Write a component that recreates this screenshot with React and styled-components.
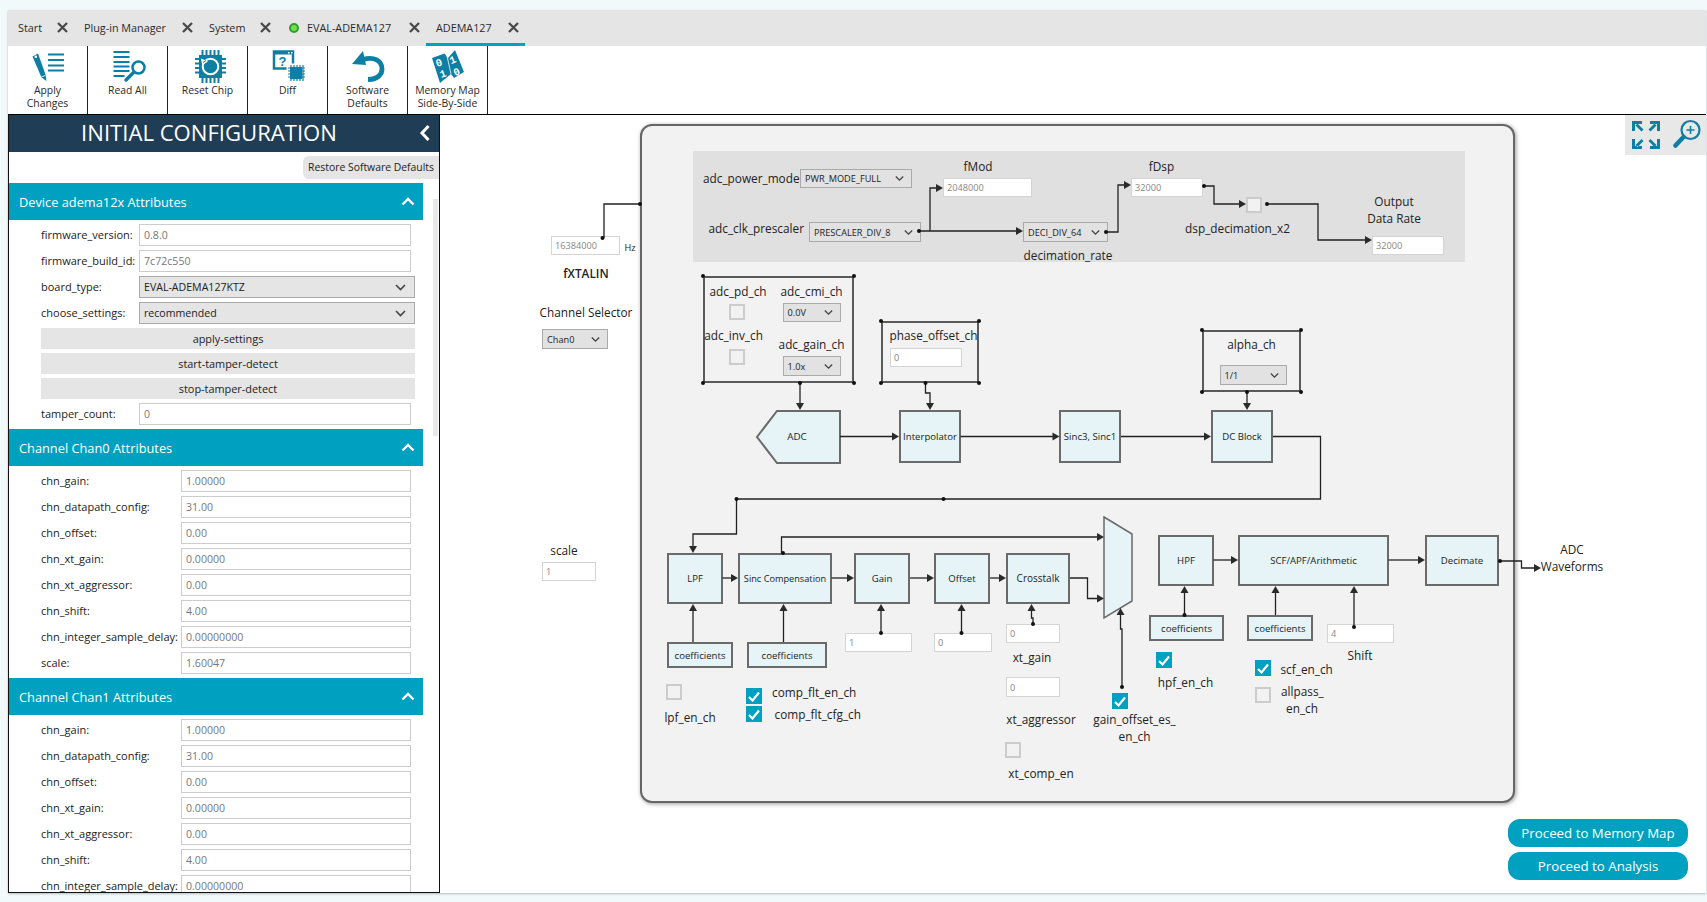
import React from 'react';
import styled, { createGlobalStyle, css } from 'styled-components';

const OX = 440;
const OY = 115;
const TEAL = '#00a1c0';
const ICON = '#0d7fa5';
const FONT = '"Open Sans", "Noto Sans", "Liberation Sans", sans-serif';

const Global = createGlobalStyle`
  html, body { margin: 0; padding: 0; height: 100%; overflow: hidden; background: #f1f9fb; }
  body { font-family: ${FONT}; color: #222; }
  #root { height: 100%; padding: 10px 1px 9px 8px; }
  * { box-sizing: border-box; }
`;

const Window = styled.div`
  width: 1698px; height: 883px;
  display: flex; flex-direction: column; background: #fff;
  box-shadow: 0 1px 2px rgba(0,0,0,.25);
`;
const TabBar = styled.div`
  height: 36px; background: #e5e5e5; display: flex; align-items: stretch; flex: none;
`;
const Tab = styled.div`
  display: flex; align-items: center; height: 36px; padding: 2px 0 0 ${p => p.$pl}px; width: ${p => p.$w}px;
  font-size: 10.8px; color: #2a2a2a; white-space: nowrap;
  border-bottom: 3px solid ${p => (p.$active ? TEAL : 'transparent')};
`;
const TabClose = styled.svg`
  margin-left: auto; margin-right: ${p => p.$mr || 6}px; width: 11px; height: 11px; flex: none;
`;
const StatusDot = styled.span`
  width: 10px; height: 10px; border-radius: 50%; background: #6fe04d; border: 2px solid #2e9e2a; margin-right: 8px; flex: none;
`;
const Toolbar = styled.div`
  height: 69px; flex: none; display: flex; border-bottom: 1px solid #000; background: #fff;
`;
const ToolButton = styled.div`
  width: 80px; height: 68px; border-right: 1px solid #222; display: flex; flex-direction: column; align-items: center;
  padding-top: 4px; font-size: 10.4px; line-height: 13px; text-align: center; color: #2a2a2a;
`;
const ToolIcon = styled.svg`
  width: 36px; height: 33px; flex: none; margin-bottom: 1px;
`;
const Main = styled.div`
  flex: 1; display: flex; min-height: 0;
`;
const Side = styled.aside`
  width: 432px; flex: none; border-left: 1px solid #111; border-right: 1px solid #111; border-bottom: 1px solid #111;
  position: relative; overflow: hidden; background: #fff;
`;
const SideHeader = styled.div`
  height: 37px; background: #1f3d55; color: #fff; font-size: 22.1px; display: flex; align-items: center; justify-content: center;
  padding: 0 30px 3px 0; position: relative;
`;
const Collapse = styled.svg`
  position: absolute; right: 8px; top: 9px; width: 12px; height: 18px;
`;
const RestoreRow = styled.div`
  height: 31px; display: flex; justify-content: flex-end; padding-top: 4px;
`;
const Restore = styled.div`
  width: 136px; height: 23px; background: #e5e5e5; border-radius: 6px 0 0 6px; font-size: 10.4px; padding-bottom: 1px; display: flex; align-items: center; justify-content: center; white-space: nowrap;
`;
const Scrollbar = styled.div`
  position: absolute; left: 424px; top: 84px; width: 5px; height: 237px; background: #e8e8e8;
`;
const SectionHead = styled.div`
  width: 414px; height: 37px; background: ${TEAL}; color: #fff; font-size: 12.8px; font-weight: 500; display: flex; align-items: center; justify-content: space-between;
  padding: 0 8px 0 10px;
`;
const Rows = styled.div`
  width: 414px; padding: 4px 0 4px 32px; display: flex; flex-direction: column; gap: 4px;
`;
const Row = styled.div`
  display: flex; align-items: center; height: 22px; padding-right: ${p => (p.$select ? 8 : 12)}px;
`;
const RowLabel = styled.label`
  width: ${p => p.$w}px; flex: none; font-size: 11px; color: #222; white-space: nowrap; padding-bottom: 1px;
`;
const FieldInput = styled.div`
  flex: 1; height: 22px; border: 1px solid #ccc; background: #fff; color: #777; font-size: 10.6px; display: flex; align-items: center; padding-left: 4px;
`;
const FieldSelect = styled.div`
  flex: 1; height: 22px; border: 1px solid #aaa; background: #e5e5e5; color: #222; font-size: 10.6px; display: flex; align-items: center; justify-content: space-between; padding: 0 8px 0 4px;
`;
const ActionBtn = styled.div`
  height: 21px; margin-right: 8px; background: #e5e5e5; font-size: 10.9px; font-weight: 500; display: flex; align-items: center; justify-content: center; color: #222; padding-bottom: 1px;
`;
const Canvas = styled.main`
  flex: 1; position: relative; overflow: hidden; background: #fff;
`;
const Wires = styled.svg`
  position: absolute; left: 0; top: 0; width: 1267px; height: 779px; pointer-events: none; z-index: 3;
`;
const Panel = styled.div`
  position: absolute; left: ${640 - OX}px; top: ${124 - OY}px; width: 875px; height: 679px; background: #f2f2f2;
  border: 2px solid #666; border-radius: 12px; box-shadow: 1px 1px 4px rgba(0,0,0,.4);
`;
const placed = p => `left:${p.$x - OX}px;top:${p.$y - OY}px;width:${p.$w}px;height:${p.$h}px;`;
const Band = styled.div`
  position: absolute; ${placed}; background: #e0e0e0;
`;
const Group = styled.div`
  position: absolute; ${placed}; border: 2px solid #5a5a5a; display: flex; flex-direction: column; align-items: center; padding-top: 5px; z-index: 2;
`;
const AdcGroup = styled(Group)`
  flex-direction: row; align-items: flex-start; padding-top: 6px;
`;
const Stack = styled.div`
  width: ${p => p.$w}px; display: flex; flex-direction: column; align-items: center; flex: none;
`;
const StackLabel = styled.span`
  font-size: 11.8px; line-height: 14px; color: #222; white-space: nowrap; margin-top: ${p => p.$mt || 0}px; margin-right: ${p => p.$mr || 0}px; margin-left: ${p => p.$ml || 0}px;
`;
const Block = styled.div`
  position: absolute; ${placed}; background: #e6f4f8; border: 2px solid #6a6a6a; font-size: ${p => p.$size || 9.6}px; color: #222; display: flex; align-items: center; justify-content: center; white-space: nowrap;
  padding-bottom: ${p => p.$pb || 0}px; z-index: 1;
`;
const Shape = styled.svg`
  position: absolute; ${placed};
`;
const ShapeText = styled.div`
  position: absolute; left: ${p => p.$cx - OX}px; top: ${p => p.$cy - OY}px; transform: translate(-50%, -50%); font-size: 9.8px; white-space: nowrap; z-index: 1;
`;
const inputCss = css`
  background: #fff; border: 1.5px solid #d4d4d4; color: #888; font-size: 9.2px; display: flex; align-items: center; padding-left: 3px;
`;
const selectCss = css`
  background: #e2e2e2; border: 1px solid #aaa; color: #222; font-size: 9.2px; display: flex; align-items: center; justify-content: space-between; padding: 0 7px 0 4px; white-space: nowrap;
`;
const boxCss = css`
  width: 16px; height: 16px; background: ${p => (p.$on ? TEAL : '#f2f2f2')}; border: 2px solid ${p => (p.$on ? TEAL : '#ccc')};
  display: flex; align-items: center; justify-content: center;
`;
const NodeInput = styled.div`
  position: absolute; ${placed}; ${inputCss}; z-index: 2;
`;
const NodeSelect = styled.div`
  position: absolute; ${placed}; ${selectCss}; z-index: 2;
`;
const GroupInput = styled.div`
  width: ${p => p.$w}px; height: 19px; margin-top: ${p => p.$mt || 0}px; margin-right: ${p => p.$mr || 0}px; ${inputCss}; flex: none;
`;
const GroupSelect = styled.div`
  width: ${p => p.$w}px; height: ${p => p.$h || 20}px; margin-top: ${p => p.$mt || 0}px; margin-left: ${p => p.$ml || 0}px; ${selectCss}; flex: none;
`;
const GroupBox = styled.div`
  ${boxCss}; margin-top: ${p => p.$mt || 0}px; margin-right: ${p => p.$mr || 0}px; flex: none;
`;
const Tag = styled.div`
  position: absolute; left: ${p => p.$x - OX}px; top: ${p => p.$y - OY - 0.5}px; transform: ${p => (p.$left ? 'translateY(-50%)' : 'translate(-50%, -50%)')};
  font-size: ${p => p.$size || 11.8}px; font-weight: ${p => p.$weight || 400}; color: #222; white-space: nowrap; z-index: 2;
`;
const Box = styled.div`
  position: absolute; left: ${p => p.$x - OX}px; top: ${p => p.$y - OY}px; ${boxCss}; z-index: 2;
`;
const ZoomBar = styled.div`
  position: absolute; right: 0; top: 0; width: 81px; height: 40px; background: #e8e8e8; display: flex; align-items: center; justify-content: space-between; padding: 0 3px 0 6px;
`;
const ZoomIcon = styled.svg`
  width: 30px; height: 32px; flex: none;
`;
const Proceed = styled.div`
  position: absolute; right: 18px; bottom: 13px; display: flex; flex-direction: column; gap: 5px;
`;
const ProceedBtn = styled.div`
  width: 180px; height: 28px; border-radius: 12px; background: ${TEAL}; color: #fff; font-size: 13.3px; display: flex; align-items: center; justify-content: center; padding-bottom: 1px;
`;

const Chev = ({ color = '#444', w = 11 }) => (
  <svg width={w} height={7} viewBox="0 0 11 7"><path d="M1 1l4.5 4.5L10 1" fill="none" stroke={color} strokeWidth="1.6" /></svg>
);
const Up = () => (
  <svg width="14" height="9" viewBox="0 0 14 9"><path d="M1.5 7.5L7 2l5.500 5.500" fill="none" stroke="#fff" strokeWidth="2.4" /></svg>
);
const Tick = () => (
  <svg width="12" height="11" viewBox="0 0 12 11"><path d="M1 6l3.500 3.500L11 1.500" fill="none" stroke="#fff" strokeWidth="2.2" /></svg>
);
const Xmark = ({ mr }) => (
  <TabClose $mr={mr} viewBox="0 0 11 11"><path d="M1 1l9 9M10 1l-9 9" stroke="#4a4a4a" strokeWidth="2.300" /></TabClose>
);

const device = [
  ['firmware_version:', 'input', '0.8.0'],
  ['firmware_build_id:', 'input', '7c72c550'],
  ['board_type:', 'select', 'EVAL-ADEMA127KTZ'],
  ['choose_settings:', 'select', 'recommended'],
  ['apply-settings', 'btn'],
  ['start-tamper-detect', 'btn'],
  ['stop-tamper-detect', 'btn'],
  ['tamper_count:', 'input', '0'],
];
const chan = [
  ['chn_gain:', 'input', '1.00000'],
  ['chn_datapath_config:', 'input', '31.00'],
  ['chn_offset:', 'input', '0.00'],
  ['chn_xt_gain:', 'input', '0.00000'],
  ['chn_xt_aggressor:', 'input', '0.00'],
  ['chn_shift:', 'input', '4.00'],
  ['chn_integer_sample_delay:', 'input', '0.00000000'],
  ['scale:', 'input', '1.60047'],
];

const Section = ({ title, rows, w }) => (
  <>
    <SectionHead>{title}<Up /></SectionHead>
    <Rows>
      {rows.map(([l, kind, v]) =>
        kind === 'btn' ? (
          <ActionBtn key={l}>{l}</ActionBtn>
        ) : (
          <Row key={l} $select={kind === 'select'}>
            <RowLabel $w={w}>{l}</RowLabel>
            {kind === 'input' ? <FieldInput>{v}</FieldInput> : <FieldSelect>{v}<Chev /></FieldSelect>}
          </Row>
        )
      )}
    </Rows>
  </>
);

const wirePaths = [
  'M604 238V204H640', 'M919 231H1016', 'M930 231V188H937', 'M1106 232H1118V185H1125', 'M1204 186H1214V204H1240',
  'M1267 204H1318V240H1366', 'M840 436.500H893', 'M960.500 436.500H1053', 'M1121 436.500H1205', 'M1273 436.500H1320.500V499H736.500V534H693V547',
  'M800 383V404', 'M925.500 383V393H930V404', 'M1247 392V404',
  'M722.500 578H732', 'M831.500 578H848', 'M910 578H928', 'M990 578H1000', 'M1070 578H1087.500V598.500H1098',
  'M781.500 553V537H1098', 'M693 642V610', 'M783.500 642V610', 'M881 633V610', 'M961.500 633V610', 'M1033 624V618H1031.500V610',
  'M1122 687V629H1120.500V614', 'M1213.500 560H1232', 'M1388.500 560H1419', 'M1500 561H1521.500V568H1535',
  'M1184.500 615V592', 'M1275.500 615V592', 'M1354 627V592',
];
const arrows = [
  [943, 188, 'r'], [1023, 231, 'r'], [1131, 185, 'r'], [1246, 204, 'r'], [1372, 240, 'r'],
  [800, 410, 'd'], [930, 410, 'd'], [1247, 410, 'd'], [899, 436.500, 'r'], [1059.500, 436.500, 'r'], [1211, 436.500, 'r'],
  [693, 553, 'd'], [738, 578, 'r'], [854, 578, 'r'], [934, 578, 'r'], [1006, 578, 'r'], [1104, 598.500, 'r'], [1104, 537, 'r'],
  [693, 604, 'u'], [783.500, 604, 'u'], [881, 604, 'u'], [961.500, 604, 'u'], [1031.500, 604, 'u'], [1120.500, 608, 'u'],
  [1238, 560, 'r'], [1425, 560, 'r'], [1541, 568, 'r'], [1184.500, 586, 'u'], [1275.500, 586, 'u'], [1354, 586, 'u'],
];
const dots = [
  [602.500, 238], [640, 204], [919, 231], [1106, 232], [1204, 186], [1267, 204],
  [703, 276], [854, 276], [703, 383], [854, 383], [800, 383],
  [881, 321], [979, 321], [881, 383], [979, 383], [925.500, 383],
  [1202, 330], [1301, 330], [1202, 392], [1301, 392], [1247, 392],
  [736.500, 499], [943.500, 499], [783, 553], [881, 633], [961.500, 633], [1033, 624], [1122, 687], [1184.500, 615], [1354, 627], [1500, 561],
];
const arrowPts = (x, y, d) => {
  if (d === 'r') return `${x},${y} ${x - 7},${y - 4} ${x - 7},${y + 4}`;
  if (d === 'd') return `${x},${y} ${x - 4},${y - 7} ${x + 4},${y - 7}`;
  return `${x},${y} ${x - 4},${y + 7} ${x + 4},${y + 7}`;
};

const App = () => (
  <>
    <Global />
    <Window>
      <TabBar>
        <Tab $pl={10} $w={66}>Start<Xmark /></Tab>
        <Tab $pl={10} $w={125}>Plug-in Manager<Xmark /></Tab>
        <Tab $pl={10} $w={77}>System<Xmark mr={5} /></Tab>
        <Tab $pl={13} $w={150}><StatusDot />EVAL-ADEMA127<Xmark /></Tab>
        <Tab $active $pl={10} $w={99}>ADEMA127<Xmark /></Tab>
      </TabBar>
      <Toolbar>
        <ToolButton>
          <ToolIcon viewBox="0 0 36 33">
            <path d="M2.500 6.500L8 3.500l7.500 21 1 6.500-5-3.500z" fill={ICON} />
            <circle cx="5.800" cy="6.800" r="1.300" fill="#fff" />
            <path d="M11 27.300l4-1.800" stroke="#fff" strokeWidth=".8" />
            <path d="M18 4.500h16M18 10h16M18 15.500h16M18 20.500h16" stroke={ICON} strokeWidth="2.200" />
          </ToolIcon>
          <span>Apply<br />Changes</span>
        </ToolButton>
        <ToolButton>
          <ToolIcon viewBox="0 0 36 33">
            <path d="M3.500 2h16M3.500 7h16M3.500 12h16M3.500 16.500h16M3.500 21h16M3.500 26h11" stroke={ICON} strokeWidth="2.200" />
            <circle cx="28.500" cy="17.500" r="6" fill="#fff" stroke={ICON} strokeWidth="2.500" />
            <path d="M23.500 22.500L16 30" stroke={ICON} strokeWidth="3.500" strokeLinecap="round" />
          </ToolIcon>
          <span>Read All</span>
        </ToolButton>
        <ToolButton>
          <ToolIcon viewBox="0 0 36 33">
            <path d="M12.500 0v5M16.500 0v5M20.500 0v5M24.500 0v5M28.500 0v5M12.500 28v5M16.500 28v5M20.500 28v5M24.500 28v5M28.500 28v5M5 9h4M5 13.500h4M5 18h4M5 22.500h4M32 9h4M32 13.500h4M32 18h4M32 22.500h4" stroke={ICON} strokeWidth="2" />
            <rect x="9" y="5" width="23" height="23" fill={ICON} />
            <circle cx="20.500" cy="16.500" r="7.800" fill={ICON} stroke="#fff" strokeWidth="2" />
            <path d="M11 8.500l1.200 6.500 5.800-3.600z" fill="#fff" />
            <path d="M13 12.500l3-2" stroke={ICON} strokeWidth="1" />
          </ToolIcon>
          <span>Reset Chip</span>
        </ToolButton>
        <ToolButton>
          <ToolIcon viewBox="0 0 36 33">
            <rect x="4" y="1.500" width="19" height="17" fill="#fff" stroke={ICON} strokeWidth="2.500" />
            <path d="M3 3h21" stroke={ICON} strokeWidth="3" />
            <path d="M18 2.800h1.500M21 2.800h1.500" stroke="#fff" strokeWidth="1.400" />
            <text x="12.500" y="16" fontSize="13" fontWeight="700" fontFamily="Liberation Sans" fill={ICON} textAnchor="middle">?</text>
            <rect x="16.500" y="13.500" width="19" height="19" fill="#fff" />
            <path d="M21 15v16M24 15v16M27 15v16M30 15v16M33 15v16M18 18h17M18 21h17M18 24h17M18 27h17" stroke={ICON} strokeWidth="1.200" />
            <rect x="20" y="17" width="12" height="12" fill={ICON} />
          </ToolIcon>
          <span>Diff</span>
        </ToolButton>
        <ToolButton>
          <ToolIcon viewBox="0 0 36 33">
            <path d="M13 9.500C24 6 32 11 32 19c0 6-5 10.500-14 10.500" fill="none" stroke={ICON} strokeWidth="4.800" />
            <path d="M2 14L13 1l3 14z" fill={ICON} />
          </ToolIcon>
          <span>Software<br />Defaults</span>
        </ToolButton>
        <ToolButton>
          <ToolIcon viewBox="0 0 36 33">
            <path d="M2 8l12.500-4.500L18 8l7-8 9 22-10 6-3-4-11 9z" fill={ICON} />
            <path d="M17 6l4 18" stroke="#fff" strokeWidth=".8" />
            <g fill="#fff" fontFamily="Liberation Mono" fontWeight="700" fontSize="10.500" textAnchor="middle">
              <text x="10" y="16" transform="rotate(-18 10 16)">0</text>
              <text x="14" y="27" transform="rotate(-18 14 27)">1</text>
              <text x="24" y="13" transform="rotate(-22 24 13)">1</text>
              <text x="28" y="25" transform="rotate(-22 28 25)">0</text>
            </g>
          </ToolIcon>
          <span>Memory Map<br />Side-By-Side</span>
        </ToolButton>
      </Toolbar>
      <Main>
        <Side>
          <SideHeader>
            INITIAL CONFIGURATION
            <Collapse viewBox="0 0 12 18"><path d="M9.500 2L3 9l6.500 7" fill="none" stroke="#fff" strokeWidth="3" /></Collapse>
          </SideHeader>
          <RestoreRow><Restore>Restore Software Defaults</Restore></RestoreRow>
          <Scrollbar />
          <Section title="Device adema12x Attributes" rows={device} w={98} />
          <Section title="Channel Chan0 Attributes" rows={chan} w={140} />
          <Section title="Channel Chan1 Attributes" rows={chan} w={140} />
        </Side>
        <Canvas>
          <Panel />
          <Band $x={693} $y={151} $w={772} $h={111} />

          <Tag $x={703} $y={178} $left>adc_power_mode</Tag>
          <NodeSelect $x={800} $y={169} $w={112} $h={19}>PWR_MODE_FULL<Chev w={9} /></NodeSelect>
          <Tag $x={708.500} $y={228} $left>adc_clk_prescaler</Tag>
          <NodeSelect $x={809} $y={222} $w={112} $h={20}>PRESCALER_DIV_8<Chev w={9} /></NodeSelect>
          <Tag $x={978} $y={166}>fMod</Tag>
          <NodeInput $x={943} $y={178} $w={89} $h={19}>2048000</NodeInput>
          <NodeSelect $x={1023} $y={222} $w={85} $h={20}>DECI_DIV_64<Chev w={9} /></NodeSelect>
          <Tag $x={1068} $y={255}>decimation_rate</Tag>
          <Tag $x={1161.500} $y={166}>fDsp</Tag>
          <NodeInput $x={1131} $y={178} $w={72} $h={19}>32000</NodeInput>
          <Box $x={1246} $y={197} />
          <Tag $x={1237.500} $y={228}>dsp_decimation_x2</Tag>
          <Tag $x={1394} $y={201}>Output</Tag>
          <Tag $x={1394} $y={218}>Data Rate</Tag>
          <NodeInput $x={1372} $y={236} $w={72} $h={19}>32000</NodeInput>

          <NodeInput $x={551} $y={236} $w={69} $h={19}>16384000</NodeInput>
          <Tag $x={630} $y={247} $size={9.200}>Hz</Tag>
          <Tag $x={586} $y={273} $weight={600}>fXTALIN</Tag>
          <Tag $x={586} $y={312}>Channel Selector</Tag>
          <NodeSelect $x={542} $y={329} $w={66} $h={20}>Chan0<Chev w={9} /></NodeSelect>
          <Tag $x={564} $y={550}>scale</Tag>
          <NodeInput $x={542} $y={562} $w={54} $h={19}>1</NodeInput>

          <AdcGroup $x={703} $y={276} $w={151} $h={107}>
            <Stack $w={66}>
              <StackLabel>adc_pd_ch</StackLabel>
              <GroupBox $mt={6} $mr={2} />
              <StackLabel $mt={8} $mr={9}>adc_inv_ch</StackLabel>
              <GroupBox $mt={7} $mr={2} />
            </Stack>
            <Stack $w={81}>
              <StackLabel>adc_cmi_ch</StackLabel>
              <GroupSelect $w={58} $h={19} $mt={5}>0.0V<Chev w={9} /></GroupSelect>
              <StackLabel $mt={15}>adc_gain_ch</StackLabel>
              <GroupSelect $w={58} $mt={5}>1.0x<Chev w={9} /></GroupSelect>
            </Stack>
          </AdcGroup>

          <Group $x={881} $y={321} $w={98} $h={62}>
            <StackLabel $ml={7}>phase_offset_ch</StackLabel>
            <GroupInput $w={72} $mt={6} $mr={8}>0</GroupInput>
          </Group>

          <Group $x={1202} $y={330} $w={99} $h={62}>
            <StackLabel>alpha_ch</StackLabel>
            <GroupSelect $w={67} $mt={14} $ml={3}>1/1<Chev w={9} /></GroupSelect>
          </Group>

          <Shape $x={755} $y={409} $w={87} $h={55} viewBox="755 409 87 55">
            <polygon points="777,411 840,411 840,463 777,463 757,437" fill="#e6f4f8" stroke="#6a6a6a" strokeWidth="2" />
          </Shape>
          <ShapeText $cx={797} $cy={436}>ADC</ShapeText>
          <Block $x={899} $y={410} $w={62} $h={53} $pb={1}>Interpolator</Block>
          <Block $x={1059} $y={410} $w={62} $h={53} $pb={1}>Sinc3, Sinc1</Block>
          <Block $x={1211} $y={410} $w={62} $h={53} $pb={1}>DC Block</Block>

          <Block $x={667} $y={553} $w={56} $h={51} $pb={1}>LPF</Block>
          <Block $x={738} $y={553} $w={94} $h={51} $pb={1} $size={9.200}>Sinc Compensation</Block>
          <Block $x={854} $y={553} $w={56} $h={51} $pb={1}>Gain</Block>
          <Block $x={934} $y={553} $w={56} $h={51} $pb={1}>Offset</Block>
          <Block $x={1006} $y={553} $w={64} $h={51} $pb={1} $size={10}>Crosstalk</Block>
          <Shape $x={1103} $y={515} $w={31} $h={105} viewBox="1103 515 31 105">
            <polygon points="1104,517 1132,534 1132,601 1104,618" fill="#e6f4f8" stroke="#6a6a6a" strokeWidth="1.500" />
          </Shape>
          <Block $x={667} $y={642} $w={66} $h={26}>coefficients</Block>
          <Block $x={747} $y={642} $w={80} $h={26}>coefficients</Block>
          <NodeInput $x={845} $y={633} $w={67} $h={19}>1</NodeInput>
          <NodeInput $x={934} $y={633} $w={58} $h={19}>0</NodeInput>
          <NodeInput $x={1006} $y={624} $w={54} $h={19}>0</NodeInput>
          <Tag $x={1032} $y={657}>xt_gain</Tag>
          <NodeInput $x={1006} $y={677} $w={54} $h={20}>0</NodeInput>
          <Tag $x={1041} $y={719}>xt_aggressor</Tag>
          <Box $x={1005} $y={742} />
          <Tag $x={1041} $y={773}>xt_comp_en</Tag>
          <Box $x={666} $y={684} />
          <Tag $x={690} $y={717}>lpf_en_ch</Tag>
          <Box $x={746} $y={688} $on><Tick /></Box>
          <Tag $x={772} $y={692} $left>comp_flt_en_ch</Tag>
          <Box $x={746} $y={706} $on><Tick /></Box>
          <Tag $x={774.500} $y={714} $left>comp_flt_cfg_ch</Tag>
          <Box $x={1112} $y={693} $on><Tick /></Box>
          <Tag $x={1134.500} $y={719}>gain_offset_es_</Tag>
          <Tag $x={1134.500} $y={736}>en_ch</Tag>

          <Block $x={1158} $y={535} $w={56} $h={51} $pb={1}>HPF</Block>
          <Block $x={1238} $y={535} $w={151} $h={51} $pb={1}>SCF/APF/Arithmetic</Block>
          <Block $x={1425} $y={535} $w={74} $h={51} $pb={1}>Decimate</Block>
          <Block $x={1149} $y={615} $w={75} $h={26}>coefficients</Block>
          <Block $x={1247} $y={615} $w={66} $h={26}>coefficients</Block>
          <NodeInput $x={1327} $y={624} $w={67} $h={19}>4</NodeInput>
          <Tag $x={1360} $y={655}>Shift</Tag>
          <Box $x={1156} $y={652} $on><Tick /></Box>
          <Tag $x={1185.500} $y={682}>hpf_en_ch</Tag>
          <Box $x={1255} $y={660} $on><Tick /></Box>
          <Tag $x={1280.500} $y={669} $left>scf_en_ch</Tag>
          <Box $x={1255} $y={687} />
          <Tag $x={1281} $y={691} $left>allpass_</Tag>
          <Tag $x={1302} $y={708}>en_ch</Tag>
          <Tag $x={1572} $y={549}>ADC</Tag>
          <Tag $x={1572} $y={566}>Waveforms</Tag>

          <Wires viewBox={`${OX} ${OY} 1267 779`}>
            {wirePaths.map(d => <path key={d} d={d} fill="none" stroke="#222" strokeWidth="1.300" />)}
            {arrows.map(([x, y, d]) => <polygon key={`${x}-${y}`} points={arrowPts(x, y, d)} fill="#2a2a2a" />)}
            {dots.map(([x, y]) => <circle key={`${x}-${y}`} cx={x} cy={y} r="2" fill="#111" />)}
          </Wires>

          <ZoomBar>
            <ZoomIcon viewBox="0 0 30 32" fill={ICON}>
              <path d="M1 2h10v3H4v7H1zM4.500 6.500l2-2 6 6-2 2zM29 2v10h-3V5h-7V2zM25.500 6.500l-2-2-6 6 2 2zM1 30V20h3v7h7v3zM4.500 26l2 2 6-6-2-2zM29 30H19v-3h7v-7h3zM25.500 26l-2 2-6-6 2-2z" />
            </ZoomIcon>
            <ZoomIcon viewBox="0 0 30 32">
              <circle cx="17.500" cy="11" r="9" fill="#e8e8e8" stroke={ICON} strokeWidth="2.200" />
              <path d="M17.500 7v8M13.500 11h8" stroke={ICON} strokeWidth="1.600" />
              <path d="M10.500 18L2.500 26.500" stroke={ICON} strokeWidth="4.500" strokeLinecap="round" />
            </ZoomIcon>
          </ZoomBar>
          <Proceed>
            <ProceedBtn>Proceed to Memory Map</ProceedBtn>
            <ProceedBtn>Proceed to Analysis</ProceedBtn>
          </Proceed>
        </Canvas>
      </Main>
    </Window>
  </>
);

export default App;
